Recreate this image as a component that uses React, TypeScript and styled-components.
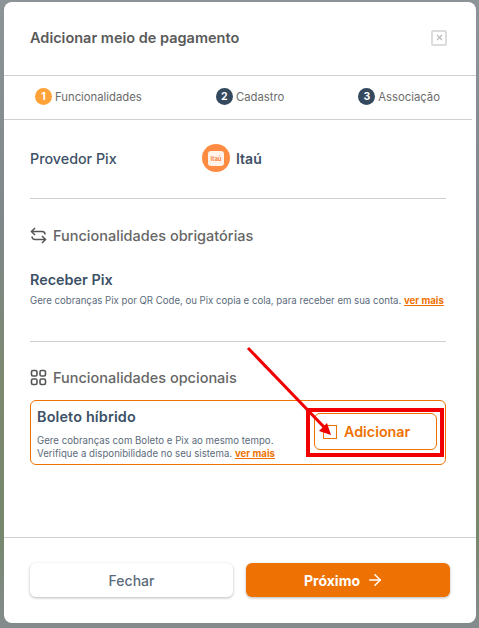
import React from 'react';
import styled, { createGlobalStyle } from 'styled-components';
import { ArrowRight, X } from 'lucide-react';

const GlobalStyle = createGlobalStyle`
  html, body {
    margin: 0;
    padding: 0;
    height: 100%;
    overflow: hidden;
  }
  body {
    font-family: Inter, "Noto Sans", sans-serif;
    background: linear-gradient(180deg, #8d9498 0%, #80878b 35%, #7d8870 60%, #75876c 85%, #858b8e 100%);
  }
`;

const Backdrop = styled.div`
  box-sizing: border-box;
  width: 479px;
  height: 628px;
  padding: 2px 3px 5px 4px;
`;

const Modal = styled.div`
  position: relative;
  box-sizing: border-box;
  height: 621px;
  background: #fff;
  border-radius: 8px;
  display: flex;
  flex-direction: column;
`;

const Header = styled.div`
  height: 71px;
  padding: 0 26px 2px;
  display: flex;
  align-items: center;
  justify-content: space-between;
  border-bottom: 1px solid #cdd0d3;
`;

const Title = styled.div`
  font-size: 14.5px;
  font-weight: 600;
  color: #5a5a5a;
`;

const CloseBox = styled.div`
  box-sizing: border-box;
  width: 16px;
  height: 16px;
  border: 2px solid #dcdcdc;
  border-radius: 2px;
  margin-right: 3px;
  display: flex;
  align-items: center;
  justify-content: center;
  color: #b9b9b9;
`;

const Stepper = styled.div`
  height: 41px;
  margin-right: 4px;
  padding: 0 32px 2px 31px;
  display: flex;
  align-items: center;
  justify-content: space-between;
  border-bottom: 1px solid #cdd0d3;
`;

const Step = styled.div`
  display: flex;
  align-items: center;
  gap: 3px;
  font-size: 11.3px;
  color: #6c6c6c;
`;

const StepBadge = styled.span<{ $active?: boolean }>`
  width: 17px;
  height: 17px;
  border-radius: 50%;
  background: ${p => (p.$active ? '#ffa338' : '#34495e')};
  color: #fff;
  font-size: 10.5px;
  font-weight: 700;
  display: flex;
  align-items: center;
  justify-content: center;
`;

const Body = styled.div`
  flex: 1;
  padding: 0 30px 0 26px;
  display: flex;
  flex-direction: column;
`;

const ProviderRow = styled.div`
  height: 76px;
  padding-bottom: 2px;
  display: flex;
  align-items: center;
  border-bottom: 1px solid #cdd0d3;
`;

const ProviderLabel = styled.div`
  width: 172px;
  font-size: 14.3px;
  font-weight: 500;
  color: #3d5166;
`;

const ProviderValue = styled.div`
  display: flex;
  align-items: center;
  gap: 6px;
  font-size: 14px;
  font-weight: 600;
  color: #3d5166;
`;

const LogoCircle = styled.div`
  width: 28px;
  height: 28px;
  border-radius: 50%;
  background: #ff8c42;
  display: flex;
  align-items: center;
  justify-content: center;
`;

const LogoSquare = styled.div`
  width: 16px;
  height: 15px;
  border-radius: 3px;
  background: #fff3ea;
  color: #f5792a;
  font-size: 6px;
  font-weight: 600;
  line-height: 15px;
  text-align: center;
`;

const SectionTitle = styled.div<{ $top: number }>`
  margin-top: ${p => p.$top}px;
  height: 20px;
  display: flex;
  align-items: center;
  gap: 6px;
  font-size: 14.5px;
  font-weight: 500;
  color: #666;
  svg {
    color: #555;
    flex: none;
  }
`;

const FeatureName = styled.div`
  font-size: 14.4px;
  font-weight: 600;
  color: #3d5166;
`;

const FeatureText = styled.div`
  font-size: 9.62px;
  line-height: 12.5px;
  color: #5b6b7b;
  white-space: nowrap;
`;

const MoreLink = styled.a`
  color: #ee7203;
  font-weight: 700;
  text-decoration: underline;
`;

const Required = styled.div`
  margin-top: 26px;
  height: 70px;
  border-bottom: 1px solid #cdd0d3;
  ${FeatureText} {
    margin-top: 7px;
  }
`;

const OptionCard = styled.div`
  position: relative;
  box-sizing: border-box;
  margin-top: 13px;
  height: 65px;
  border: 1px solid #ee7203;
  border-radius: 6px;
  padding: 7px 6px 6px;
  display: flex;
  justify-content: space-between;
`;

const OptionInfo = styled.div`
  ${FeatureName} {
    letter-spacing: 0.15px;
  }
  ${FeatureText} {
    margin-top: 10px;
    letter-spacing: 0.03px;
  }
`;

const AddButton = styled.div`
  box-sizing: border-box;
  width: 123px;
  height: 37px;
  margin: 5px 2px 0 0;
  border: 1px solid #ee7203;
  border-radius: 6px;
  padding-left: 8px;
  display: flex;
  align-items: center;
  gap: 7px;
  font-size: 14.3px;
  font-weight: 600;
  color: #ee7203;
`;

const CheckSquare = styled.span`
  box-sizing: border-box;
  width: 14px;
  height: 14px;
  border: 1px solid #ee7203;
`;

const RedFrame = styled.div`
  position: absolute;
  box-sizing: border-box;
  left: 275px;
  top: 7px;
  width: 138px;
  height: 49px;
  border: 4px solid #f00000;
`;

const ArrowMark = styled.svg`
  position: absolute;
  left: 240px;
  top: 340px;
  pointer-events: none;
`;

const Footer = styled.div`
  height: 86px;
  padding: 25px 26px 0;
  box-sizing: border-box;
  border-top: 1px solid #cdd0d3;
  display: flex;
  gap: 13px;
`;

const FooterButton = styled.div<{ $primary?: boolean }>`
  box-sizing: border-box;
  width: ${p => (p.$primary ? 204 : 203)}px;
  height: 34px;
  padding-right: ${p => (p.$primary ? 8 : 0)}px;
  border-radius: 6px;
  display: flex;
  align-items: center;
  justify-content: center;
  gap: 6px;
  font-size: 14px;
  font-weight: ${p => (p.$primary ? 700 : 500)};
  color: ${p => (p.$primary ? '#fff' : '#5b6b7b')};
  background: ${p => (p.$primary ? '#ee7203' : '#fff')};
  box-shadow: 0 1px 3px rgba(0, 0, 0, 0.28);
`;

const steps = ['Funcionalidades', 'Cadastro', 'Associação'];

const SwapIcon = () => (
  <svg width="17" height="17" viewBox="0 0 17 17" fill="none" stroke="currentColor" strokeWidth="1.5">
    <path d="M1.5 4.5H12a3 3 0 0 1 3 3" />
    <path d="M5 1L1.5 4.5L5 8" />
    <path d="M2 9.5a3 3 0 0 0 3 3H15.5" />
    <path d="M12 9L15.5 12.5L12 16" />
  </svg>
);

const GridIcon = () => (
  <svg width="17" height="17" viewBox="0 0 17 17" fill="none" stroke="currentColor" strokeWidth="1.6">
    <rect x="1.5" y="1.5" width="5.5" height="5.5" rx="1.5" />
    <rect x="10" y="1.5" width="5.5" height="5.5" rx="1.5" />
    <rect x="1.5" y="10" width="5.5" height="5.5" rx="1.5" />
    <rect x="10" y="10" width="5.5" height="5.5" rx="1.5" />
  </svg>
);

export default function App() {
  return (
    <Backdrop>
      <GlobalStyle />
      <Modal>
        <Header>
          <Title>Adicionar meio de pagamento</Title>
          <CloseBox>
            <X size={9} strokeWidth={3} />
          </CloseBox>
        </Header>
        <Stepper>
          {steps.map((label, i) => (
            <Step key={label}>
              <StepBadge $active={i === 0}>{i + 1}</StepBadge>
              {label}
            </Step>
          ))}
        </Stepper>
        <Body>
          <ProviderRow>
            <ProviderLabel>Provedor Pix</ProviderLabel>
            <ProviderValue>
              <LogoCircle>
                <LogoSquare>Itaú</LogoSquare>
              </LogoCircle>
              Itaú
            </ProviderValue>
          </ProviderRow>
          <SectionTitle $top={26}>
            <SwapIcon />
            Funcionalidades obrigatórias
          </SectionTitle>
          <Required>
            <FeatureName>Receber Pix</FeatureName>
            <FeatureText>
              Gere cobranças Pix por QR Code, ou Pix copia e cola, para receber em sua conta. <MoreLink>ver mais</MoreLink>
            </FeatureText>
          </Required>
          <SectionTitle $top={25}>
            <GridIcon />
            Funcionalidades opcionais
          </SectionTitle>
          <OptionCard>
            <OptionInfo>
              <FeatureName>Boleto híbrido</FeatureName>
              <FeatureText>
                Gere cobranças com Boleto e Pix ao mesmo tempo.
                <br />
                Verifique a disponibilidade no seu sistema. <MoreLink>ver mais</MoreLink>
              </FeatureText>
            </OptionInfo>
            <AddButton>
              <CheckSquare />
              Adicionar
            </AddButton>
            <RedFrame />
          </OptionCard>
        </Body>
        <Footer>
          <FooterButton>Fechar</FooterButton>
          <FooterButton $primary>
            Próximo
            <ArrowRight size={18} strokeWidth={2} />
          </FooterButton>
        </Footer>
        <ArrowMark width="100" height="100" viewBox="0 0 100 100" fill="none">
          <path d="M4 6L80 85" stroke="#f00000" strokeWidth="3" />
          <path d="M87 93L75 89L83 81Z" fill="#f00000" />
        </ArrowMark>
      </Modal>
    </Backdrop>
  );
}
